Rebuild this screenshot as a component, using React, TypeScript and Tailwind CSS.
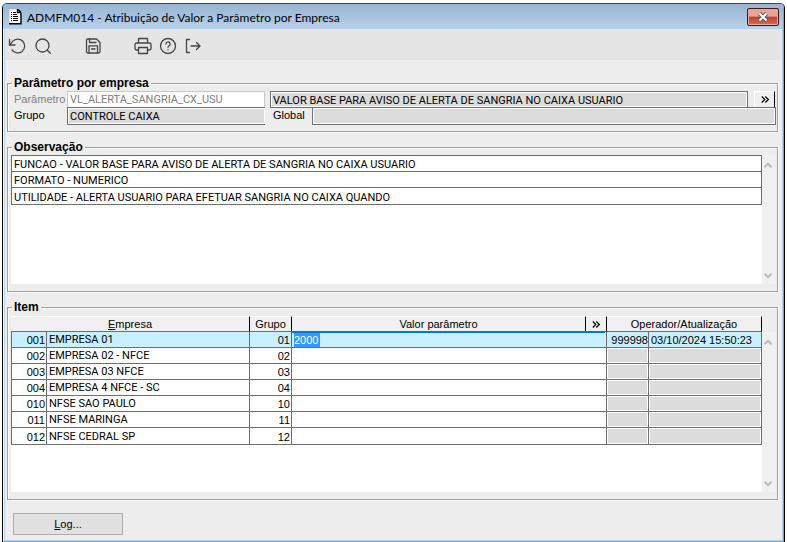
import React, { useState } from "react";

const observacoes = [
  "FUNCAO - VALOR BASE PARA AVISO DE ALERTA DE SANGRIA NO CAIXA USUARIO",
  "FORMATO - NUMERICO",
  "UTILIDADE - ALERTA USUARIO PARA EFETUAR SANGRIA NO CAIXA QUANDO",
];

const empresas = [
  { codigo: "001", nome: "EMPRESA 01", grupo: "01", operador: "999998", data: "03/10/2024 15:50:23" },
  { codigo: "002", nome: "EMPRESA 02 - NFCE", grupo: "02", operador: "", data: "" },
  { codigo: "003", nome: "EMPRESA 03 NFCE", grupo: "03", operador: "", data: "" },
  { codigo: "004", nome: "EMPRESA 4 NFCE - SC", grupo: "04", operador: "", data: "" },
  { codigo: "010", nome: "NFSE SAO PAULO", grupo: "10", operador: "", data: "" },
  { codigo: "011", nome: "NFSE MARINGA", grupo: "11", operador: "", data: "" },
  { codigo: "012", nome: "NFSE CEDRAL SP", grupo: "12", operador: "", data: "" },
];

const ToolButton = ({ label, children }: { label: string; children: React.ReactNode }) => (
  <button type="button" aria-label={label} className="block w-[18px] h-[18px]">
    <svg viewBox="0 0 18 18" className="w-full h-full" fill="none" stroke="#444" strokeWidth="1.3" strokeLinecap="round" strokeLinejoin="round">
      {children}
    </svg>
  </button>
);

const Chevrons = () => (
  <svg viewBox="0 0 8 7" className="w-2 h-[7px]" fill="none" stroke="#000" strokeWidth="1.2">
    <path d="M.8.5l3 3-3 3M4.3.5l3 3-3 3" />
  </svg>
);

const Scrollbar = () => (
  <div className="w-[14px] shrink-0 bg-[#f0f0f0] flex flex-col justify-between items-center pt-[7px] pb-[5px] pr-[2px]">
    <button type="button" aria-label="Rolar para cima" className="w-2 h-[6px]">
      <svg viewBox="0 0 8 6" className="block w-full h-full" fill="none" stroke="#bdbdbd" strokeWidth="2.2">
        <path d="M.5 5.200L4 1.700 7.500 5.200" />
      </svg>
    </button>
    <button type="button" aria-label="Rolar para baixo" className="w-2 h-[6px]">
      <svg viewBox="0 0 8 6" className="block w-full h-full" fill="none" stroke="#bdbdbd" strokeWidth="2.2">
        <path d="M.5.800L4 4.300 7.500.800" />
      </svg>
    </button>
  </div>
);

const Group = ({ title, children }: { title: string; children: React.ReactNode }) => (
  <fieldset className="min-w-0 border border-[#a0a0a0] shadow-[1px_1px_0_#fff,inset_1px_1px_0_#fff] pl-[3px] pr-px pb-[6px]">
    <legend className="ml-px px-[2px] h-[15px] leading-[15px] text-[12px] font-bold bg-[#ededed]">{title}</legend>
    {children}
  </fieldset>
);

const App = () => {
  const [valores, setValores] = useState<string[]>(["2000", "", "", "", "", "", ""]);

  const handleValor = (index: number, valor: string) => {
    setValores(valores.map((v, i) => (i === index ? valor : v)));
  };

  return (
    <div className="min-h-screen bg-white pt-[3px] px-[2px] flex flex-col text-[11px] text-black font-['Liberation_Sans',Arial,sans-serif]">
      <div className="flex-1 flex flex-col border border-b-0 border-black border-t-[#444] rounded-t-[5px] overflow-hidden">
        <div className="flex-1 flex flex-col border-r border-b border-[#45b8dc]">
          <header className="h-[25px] pl-[6px] pr-1 flex items-center bg-linear-to-b from-[#98b4d2] to-[#b9d1ea]">
            <svg viewBox="0 0 13 16" className="w-[13px] h-4 shrink-0">
              <path d="M.5.500h8l3 3v11H.5z" fill="#fff" />
              <path d="M0 14.800h12V4M8.500 0v3.500H12M8.500 0l3.500 3.500" fill="none" stroke="#000" strokeWidth="1.400" />
              <path d="M2 3.500h1M4 3.500h3M2 5.500h1M4 5.500h4M2 7.500h1M4 7.500h5M2 9.500h1M4 9.500h5M2 11.500h1M4 11.500h5" stroke="#000" strokeWidth="1" />
            </svg>
            <h1 className="pl-[5px] pt-[2px] flex-1 text-[12px] leading-4 font-['Lato',sans-serif]">
              ADMFM014 - Atribuição de Valor a Parâmetro por Empresa
            </h1>
            <button
              type="button"
              aria-label="Fechar"
              className="w-8 h-[18px] border border-[#47151a] rounded-[2px] shadow-[inset_0_0_0_1px_#e9a79d] bg-linear-to-b from-[#e6a599] from-45% via-[#bd3f2a] via-50% to-[#d0705c] flex items-center justify-center"
            >
              <svg viewBox="0 0 12 10" className="w-3 h-[10px]" fill="none">
                <path d="M2.500 1.500l7 7M9.500 1.500l-7 7" stroke="#53535c" strokeWidth="4" />
                <path d="M2.500 1.500l7 7M9.500 1.500l-7 7" stroke="#fff" strokeWidth="2" />
              </svg>
            </button>
          </header>

          <div className="flex-1 flex flex-col ml-px border-l border-r border-b border-[#b9d1ea] bg-[#ededed]">
            <nav className="h-[31px] pl-[3px] pt-[3px] flex items-center bg-[#e5e5e5]">
              <div className="flex gap-2">
                <ToolButton label="Desfazer">
                  <path d="M1.500 2.500v5.500h5.500" />
                  <path d="M1.500 8L4.600 4.400a6.900 6.900 0 1 1-.6 8.400" />
                </ToolButton>
                <ToolButton label="Pesquisar">
                  <circle cx="8.500" cy="8.500" r="6.500" />
                  <path d="M13.300 13.300l3 3" />
                </ToolButton>
              </div>
              <div className="ml-8">
                <ToolButton label="Salvar">
                  <path d="M2.500 3.500A1.500 1.500 0 0 1 4 2h8.500L16 5.500v9a1.500 1.500 0 0 1-1.500 1.500H4a1.500 1.500 0 0 1-1.500-1.500z" />
                  <path d="M5.500 2v3.500h6.500M5 16V8.800h8.500V16M7.500 12h3.500" />
                </ToolButton>
              </div>
              <div className="ml-8 flex gap-[7px]">
                <ToolButton label="Imprimir">
                  <path d="M4.500 6V1.500h9V6M4.500 13H2.500A1.500 1.500 0 0 1 1 11.500v-4A1.500 1.500 0 0 1 2.500 6h13A1.500 1.500 0 0 1 17 7.500v4a1.500 1.500 0 0 1-1.500 1.500h-2" />
                  <path d="M4.500 10.500h9v6h-9z" />
                </ToolButton>
                <ToolButton label="Ajuda">
                  <circle cx="9" cy="9" r="7.500" />
                  <path d="M6.900 7a2.100 2.100 0 1 1 3.200 1.800c-.8.500-1.100.8-1.100 1.500M9 12.600v.1" />
                </ToolButton>
                <ToolButton label="Sair">
                  <path d="M5.500 2.500h-3v13h3M7 9h9M12.500 5.500L16 9l-3.500 3.500" />
                </ToolButton>
              </div>
            </nav>

            <main className="pt-4 pl-[2px] pr-1 flex flex-col gap-2">
              <Group title="Parâmetro por empresa">
                <div className="flex items-start">
                  <label htmlFor="parametro" className="w-14 pl-[3px] leading-4 text-[#808080]">Parâmetro</label>
                  <input
                    id="parametro"
                    defaultValue="VL_ALERTA_SANGRIA_CX_USU"
                    className="w-[198px] h-4 pt-px px-[2px] border border-b-0 border-[#c8c8c8] bg-white text-[#808080] font-['Roboto',sans-serif] outline-none"
                  />
                  <input
                    aria-label="Descrição do parâmetro"
                    readOnly
                    value="VALOR BASE PARA AVISO DE ALERTA DE SANGRIA NO CAIXA USUARIO"
                    className="ml-[5px] flex-1 min-w-0 h-[17px] -mb-px pt-px px-[2px] border border-[#6e6e6e] shadow-[inset_0_0_0_1px_#fff] bg-[#dcdcdc] font-['Roboto',sans-serif] outline-none"
                  />
                  <button
                    type="button"
                    aria-label="Detalhes"
                    className="ml-[6px] mr-px w-[21px] h-4 border-t border-l border-t-white border-l-white border-r border-r-black bg-[#f0f0f0] flex items-center justify-center"
                  >
                    <Chevrons />
                  </button>
                </div>
                <div className="flex">
                  <label htmlFor="grupo" className="w-14 pl-[3px] leading-4">Grupo</label>
                  <input
                    id="grupo"
                    readOnly
                    value="CONTROLE CAIXA"
                    className="w-[198px] h-[18px] px-[2px] border border-r-0 border-[#6e6e6e] shadow-[inset_0_0_0_1px_#fff] bg-[#dcdcdc] font-['Roboto',sans-serif] outline-none"
                  />
                  <label htmlFor="global" className="w-[47px] pl-2 leading-4">Global</label>
                  <input
                    id="global"
                    readOnly
                    value=""
                    className="flex-1 min-w-0 h-[18px] px-[2px] border border-[#6e6e6e] shadow-[inset_0_0_0_1px_#fff] bg-[#dcdcdc] font-['Roboto',sans-serif] outline-none"
                  />
                </div>
              </Group>

              <Group title="Observação">
                <div className="flex min-h-[129px] mb-px">
                  <div className="flex-1 min-w-0 bg-white">
                    <div className="border-t border-[#6e6e6e]">
                      {observacoes.map((linha, i) => (
                        <input
                          key={i}
                          aria-label={`Observação ${i + 1}`}
                          readOnly
                          value={linha}
                          className="block w-full h-4 last:h-[17px] pt-[2px] px-[2px] border border-t-0 border-[#6e6e6e] bg-white leading-[13px] font-['Roboto',sans-serif] outline-none"
                        />
                      ))}
                    </div>
                  </div>
                  <Scrollbar />
                </div>
              </Group>

              <Group title="Item">
                <div className="flex min-h-[177px] pt-px mb-px">
                  <div className="flex-1 min-w-0 bg-white">
                    <table className="w-full table-fixed border-separate border-spacing-0">
                      <colgroup>
                        <col className="w-9" />
                        <col className="w-[203px]" />
                        <col className="w-[42px]" />
                        <col />
                        <col className="w-[21px]" />
                        <col className="w-[42px]" />
                        <col className="w-[113px]" />
                      </colgroup>
                      <thead>
                        <tr className="h-4 bg-[#f0f0f0] *:p-0 *:h-4 *:leading-[14px] *:font-normal *:border-t *:border-t-white *:border-b *:border-b-[#6e6e6e] *:border-r *:border-r-black">
                          <th colSpan={2}><u>E</u>mpresa</th>
                          <th>Grupo</th>
                          <th>Valor parâmetro</th>
                          <th>
                            <button type="button" aria-label="Expandir valor" className="w-full h-[14px] flex items-center justify-center">
                              <Chevrons />
                            </button>
                          </th>
                          <th colSpan={2}>Operador/Atualização</th>
                        </tr>
                      </thead>
                      <tbody>
                        {empresas.map((e, i) => (
                          <tr
                            key={e.codigo}
                            className={`*:p-0 *:pt-px *:h-4 *:leading-[14px] *:border-b *:border-r *:border-[#6e6e6e] last:*:h-[17px] ${i === 0 ? "bg-[#c8f0ff]" : "bg-white"}`}
                          >
                            <td className="border-l text-right"><span className="pr-px">{e.codigo}</span></td>
                            <td className="font-['Roboto',sans-serif]"><span className="pl-[2px]">{e.nome}</span></td>
                            <td className="text-right"><span className="pr-px">{e.grupo}</span></td>
                            <td colSpan={2}>
                              <div className={i === 0 ? "flex h-[14px] pl-[2px] shadow-[-1px_-2px_0_#0078d7,0_-1px_0_#c8f0ff]" : "flex h-[14px] pl-[2px]"}>
                                <input
                                  aria-label={`Valor parâmetro ${e.nome}`}
                                  value={valores[i]}
                                  onChange={(ev) => handleValor(i, ev.target.value)}
                                  className={i === 0 ? "w-[26px] h-[14px] bg-[#3399ff] text-white border-r border-[#d07020] outline-none" : "w-full h-[14px] outline-none"}
                                />
                              </div>
                            </td>
                            <td className={i === 0 ? "text-right" : "bg-[#dcdcdc] shadow-[inset_0_0_0_1px_#fff]"}>{e.operador}</td>
                            <td className={i === 0 ? "" : "bg-[#dcdcdc] shadow-[inset_0_0_0_1px_#fff]"}>
                              <span className="pl-[2px]">{e.data}</span>
                            </td>
                          </tr>
                        ))}
                      </tbody>
                    </table>
                  </div>
                  <div className="flex pt-4"><Scrollbar /></div>
                </div>
              </Group>
            </main>

            <footer className="pt-[13px] pb-[5px] pl-2">
              <button type="button" className="block w-[110px] h-[22px] border border-[#adadad] bg-[#e1e1e1]">
                <u>L</u>og...
              </button>
            </footer>
          </div>
        </div>
      </div>
    </div>
  );
};

export default App;
